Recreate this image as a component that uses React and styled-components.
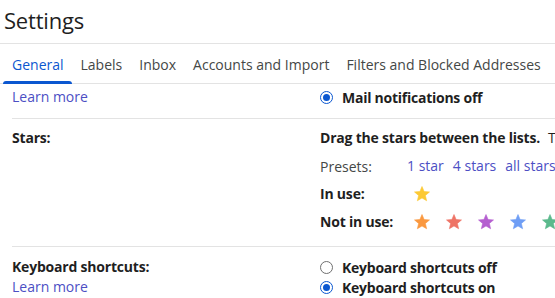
import React from "react";
import styled, { createGlobalStyle } from "styled-components";

const GlobalStyle = createGlobalStyle`
  html, body {
    margin: 0;
    background: #fff;
    overflow: hidden;
  }
  body {
    font-family: "Open Sans", Roboto, "Liberation Sans", Arial, sans-serif;
    color: #1f1f1f;
    -webkit-font-smoothing: antialiased;
  }
`;

const Page = styled.div`
  width: 555px;
  height: 298px;
  overflow: hidden;
  white-space: nowrap;
`;

const Header = styled.header`
  height: 44px;
  display: flex;
  align-items: center;
  padding: 0 0 3px 4px;
  box-sizing: border-box;
  border-bottom: 1px solid #e3e3e3;
`;

const Title = styled.h1`
  margin: 0;
  font-size: 22px;
  font-weight: 400;
  color: #1f1f1f;
  letter-spacing: -0.2px;
`;

const TabBar = styled.nav`
  display: flex;
  height: 39px;
  padding-left: 3px;
  border-bottom: 1px solid #e3e3e3;
`;

const Tab = styled.a`
  position: relative;
  display: flex;
  align-items: center;
  padding: 1px 8px 0 9px;
  font-size: 14px;
  color: ${(p) => (p.$active ? "#0b57d0" : "#444746")};
  text-decoration: none;
  cursor: pointer;

  &::after {
    content: "";
    display: ${(p) => (p.$active ? "block" : "none")};
    position: absolute;
    left: 0;
    right: 0;
    bottom: -1px;
    height: 3px;
    border-radius: 3px 3px 0 0;
    background: #0b57d0;
  }
`;

const Section = styled.section`
  display: grid;
  grid-template-columns: 308px 1fr;
  margin-left: 12px;
  padding: ${(p) => p.$pad};
  border-bottom: ${(p) => (p.$last ? "none" : "1px solid #e3e3e3")};
`;

const Column = styled.div`
  display: flex;
  flex-direction: column;
  min-width: 0;
`;

const Label = styled.div`
  font-size: 14px;
  line-height: 20px;
  font-weight: 700;
  letter-spacing: -0.2px;
  color: #1f1f1f;
`;

const Link = styled.a`
  font-size: 14px;
  line-height: 20px;
  color: #4c4fc4;
  text-decoration: none;
  cursor: pointer;
`;

const RadioRow = styled.label`
  display: flex;
  align-items: center;
  gap: 9px;
  height: 20px;
  font-size: 14px;
  font-weight: 700;
  letter-spacing: -0.25px;
  color: #1f1f1f;
`;

const Radio = styled.span`
  width: 13px;
  height: 13px;
  box-sizing: border-box;
  border-radius: 50%;
  border: ${(p) => (p.$checked ? "1.5px solid #0b57d0" : "1px solid #6f6f6f")};
  display: flex;
  align-items: center;
  justify-content: center;
  flex: none;

  &::after {
    content: "";
    display: ${(p) => (p.$checked ? "block" : "none")};
    width: 7px;
    height: 7px;
    border-radius: 50%;
    background: #0b57d0;
  }
`;

const Note = styled.span`
  font-weight: 400;
  letter-spacing: 0;
  margin-left: 8px;
`;

const StarGrid = styled.div`
  display: grid;
  grid-template-columns: 87px 1fr;
  grid-auto-rows: 20px;
  row-gap: 8px;
  margin-top: 8px;
  align-items: center;
`;

const PlainLabel = styled.div`
  font-size: 14px;
  color: #444746;
`;

const Presets = styled.div`
  display: flex;
  gap: 9px;
`;

const Stars = styled.div`
  display: flex;
  gap: 14px;
  padding-left: 6px;
`;

const StarIcon = ({ color }) => (
  <svg width="18" height="18" viewBox="0 0 24 24" aria-hidden="true">
    <path
      fill={color}
      stroke={color}
      strokeWidth="0.8"
      strokeLinejoin="round"
      d="M12 17.27L18.18 21l-1.64-7.03L22 9.24l-7.19-.61L12 2 9.19 8.63 2 9.24l5.46 4.73L5.82 21z"
    />
  </svg>
);

const tabs = ["General", "Labels", "Inbox", "Accounts and Import", "Filters and Blocked Addresses"];
const notInUse = ["#fa983f", "#ee7466", "#b55fd0", "#6f9ef5", "#5bb98c"];

export default function App() {
  return (
    <Page>
      <GlobalStyle />
      <Header>
        <Title>Settings</Title>
      </Header>

      <TabBar>
        {tabs.map((t, i) => (
          <Tab key={t} $active={i === 0}>
            {t}
          </Tab>
        ))}
      </TabBar>

      <Section $pad="3px 0 11px">
        <Column>
          <Link>Learn more</Link>
        </Column>
        <Column>
          <RadioRow>
            <Radio $checked />
            Mail notifications off
          </RadioRow>
        </Column>
      </Section>

      <Section $pad="9px 0 14px">
        <Column>
          <Label>Stars:</Label>
        </Column>
        <Column>
          <Label>
            Drag the stars between the lists.
            <Note>The stars will rotate</Note>
          </Label>
          <StarGrid>
            <PlainLabel>Presets:</PlainLabel>
            <Presets>
              <Link>1 star</Link>
              <Link>4 stars</Link>
              <Link>all stars</Link>
            </Presets>
            <Label>In use:</Label>
            <Stars>
              <StarIcon color="#fcc934" />
            </Stars>
            <Label>Not in use:</Label>
            <Stars>
              {notInUse.map((c) => (
                <StarIcon key={c} color={c} />
              ))}
            </Stars>
          </StarGrid>
        </Column>
      </Section>

      <Section $pad="10px 0 10px" $last>
        <Column>
          <Label>Keyboard shortcuts:</Label>
          <Link>Learn more</Link>
        </Column>
        <Column>
          <RadioRow>
            <Radio />
            Keyboard shortcuts off
          </RadioRow>
          <RadioRow>
            <Radio $checked />
            Keyboard shortcuts on
          </RadioRow>
        </Column>
      </Section>
    </Page>
  );
}
